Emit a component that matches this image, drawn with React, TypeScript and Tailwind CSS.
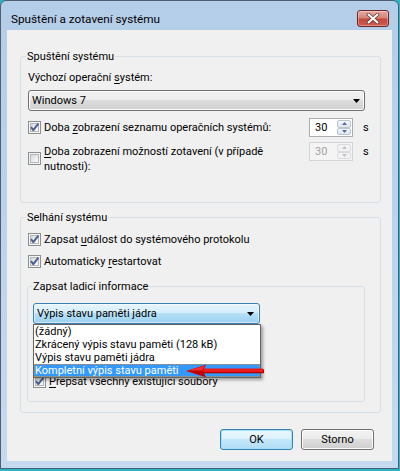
import React from "react";

function Check({ checked = false }: { checked?: boolean }) {
  return (
    <span className="relative flex w-[13px] h-[13px] shrink-0 border border-[#8e8f8f] bg-[#f4f4f4] p-[1px]">
      <span className="block w-full h-full border border-[#b4b7bb] bg-gradient-to-br from-[#d6d9dd] to-[#fbfbfb]" />
      {checked && (
        <svg className="absolute left-0 top-0" width="11" height="11" viewBox="0 0 11 11">
          <path d="M2 5.2 L4.3 8.2 L9.4 1.6" fill="none" stroke="#4b5e90" strokeWidth="1.9" strokeLinejoin="round" />
        </svg>
      )}
    </span>
  );
}

function DownTriangle() {
  return (
    <svg width="7" height="4" viewBox="0 0 7 4">
      <path d="M0 0 H7 L3.5 4 Z" fill="#000" />
    </svg>
  );
}

function SpinHalf({ up, disabled }: { up?: boolean; disabled?: boolean }) {
  return (
    <span
      className={`flex-1 flex items-center justify-center rounded-[2px] border ${
        disabled
          ? "border-[#d9dbde] bg-[#f2f2f2]"
          : "border-[#b9c4d0] bg-gradient-to-b from-[#f6f8fa] to-[#dfe5ec]"
      }`}
    >
      <svg width="5" height="3" viewBox="0 0 5 3">
        <path d={up ? "M0 3 L2.5 0 L5 3 Z" : "M0 0 L5 0 L2.5 3 Z"} fill={disabled ? "#c2c2c2" : "#4e6aa8"} />
      </svg>
    </span>
  );
}

function Spinner({ disabled }: { disabled?: boolean }) {
  return (
    <div
      className={`flex w-[44px] h-[19px] shrink-0 border ${
        disabled ? "border-[#d2d4d8] bg-[#f4f4f4] text-[#a3a3a3]" : "border-[#abadb3] bg-white text-black"
      }`}
    >
      <span className="flex-1 pl-[5px] leading-[17px]">30</span>
      <div className="w-[16px] flex flex-col p-[1px] gap-0">
        <SpinHalf up disabled={disabled} />
        <SpinHalf disabled={disabled} />
      </div>
    </div>
  );
}

function Acc({ c }: { c: string }) {
  return <span className="underline underline-offset-[2px] decoration-1">{c}</span>;
}

export default function App() {
  return (
    <div className="w-[400px] h-[471px] bg-[#2ab6c8] font-[Roboto,'Liberation_Sans',sans-serif] text-[11px] text-black overflow-hidden">
      <div className="w-[399px] h-[469px] rounded-t-[6px] border border-[#4e5f72] bg-gradient-to-b from-[#b4cde8] to-[#c6daef] flex flex-col">
        {/* caption */}
        <div className="h-[29px] flex items-start pl-[10px] pr-[9px] shrink-0">
          <span className="mt-[10px] text-[11.75px] leading-[16px]">Spuštění a zotavení systému</span>
          <div className="ml-auto mt-[9px] w-[32px] h-[17px] rounded-[3px] border border-[#6b2a2a] bg-[linear-gradient(to_bottom,#e9aaa0_0%,#d78378_45%,#c4473b_55%,#cf5e4e_100%)] shadow-[inset_0_0_0_1px_rgba(255,255,255,0.3)] flex items-center justify-center">
            <svg width="14" height="11" viewBox="0 0 14 11">
              <path d="M2.5 1.5 L11.5 9.5 M11.5 1.5 L2.5 9.5" stroke="#5a3a3a" strokeWidth="3.6" strokeLinecap="round" />
              <path d="M2.5 1.5 L11.5 9.5 M11.5 1.5 L2.5 9.5" stroke="#ffffff" strokeWidth="2" strokeLinecap="round" />
            </svg>
          </div>
        </div>

        {/* client area */}
        <div className="flex-1 px-[6px] pb-[7px]">
          <div className="h-[431px] bg-[#f0f0f0] flex flex-col pl-[13px] pr-[11px]">
            {/* Spuštění systému */}
            <fieldset className="mt-[19px] border border-[#d5dfe5] rounded-[3px] px-[7px] pb-[28px]">
              <legend className="-ml-[2px] px-[1px] leading-[15px]">Spuštění systému</legend>
              <div className="pt-[6px] leading-[15px]">
                Výchozí operační <Acc c="s" />ystém:
              </div>
              <div className="mt-[5px] mr-[8px] h-[21px] rounded-[3px] border border-[#707070] bg-[linear-gradient(to_bottom,#f2f2f2_0%,#ebebeb_50%,#dddddd_50%,#cfcfcf_100%)] shadow-[inset_0_0_0_1px_#fcfcfc] flex items-center pl-[3px] pr-[4px]">
                <span className="flex-1 leading-[15px]">Windows 7</span>
                <DownTriangle />
              </div>
              <div className="mt-[7px] flex items-center h-[19px]">
                <Check checked />
                <span className="ml-[3px] flex-1 leading-[15px]">
                  Doba <Acc c="z" />obrazení seznamu operačních systémů:
                </span>
                <Spinner />
                <span className="w-[20px] pl-[10px] leading-[15px]">s</span>
              </div>
              <div className="mt-[5px] flex items-start">
                <div className="flex-1 flex items-center">
                  <Check />
                  <span className="ml-[3px] pt-[2px] pr-[14px] leading-[15px]">
                    <Acc c="D" />oba zobrazení možností zotavení (v případě nutnosti):
                  </span>
                </div>
                <Spinner disabled />
                <span className="w-[20px] pl-[10px] leading-[15px] pt-[2px]">s</span>
              </div>
            </fieldset>

            {/* Selhání systému */}
            <fieldset className="mt-[7px] border border-[#d5dfe5] rounded-[3px] pl-[7px] pr-[7px] pb-[10px]">
              <legend className="-ml-[2px] px-[1px] leading-[15px]">Selhání systému</legend>
              <div className="pt-[7px] flex items-center h-[15px] box-content">
                <Check checked />
                <span className="ml-[3px] leading-[15px]">
                  Zapsat <Acc c="u" />dálost do systémového protokolu
                </span>
              </div>
              <div className="mt-[7px] flex items-center h-[15px]">
                <Check checked />
                <span className="ml-[3px] leading-[15px]">
                  Automaticky <Acc c="r" />estartovat
                </span>
              </div>

              <fieldset className="mt-[10px] -ml-[1px] mr-[8px] border border-[#d5dfe5] rounded-[3px] pl-[5px] pr-[5px] pb-[12px]">
                <legend className="-ml-[1px] px-[1px] leading-[15px]">Zapsat ladicí informace</legend>
                <div className="relative mt-[9px] w-[227px]">
                  <div className="h-[21px] rounded-[3px] border border-[#3c7fb1] bg-[linear-gradient(to_bottom,#e6f5fc_0%,#d2edfb_50%,#b6e0f7_50%,#9bd0f0_100%)] shadow-[inset_0_0_0_1px_rgba(255,255,255,0.55)] flex items-center pl-[3px] pr-[5px]">
                    <span className="flex-1 leading-[15px]">Výpis stavu paměti jádra</span>
                    <DownTriangle />
                  </div>

                  {/* open drop-down list */}
                  <div className="absolute left-0 top-full w-[228px] border border-[#646464] bg-white shadow-[2px_2px_3px_rgba(0,0,0,0.35)] z-10">
                    <div className="h-[13px] leading-[13px] pl-[1px]">(žádný)</div>
                    <div className="h-[13px] leading-[13px] pl-[1px]">Zkrácený výpis stavu paměti (128 kB)</div>
                    <div className="h-[13px] leading-[13px] pl-[1px]">Výpis stavu paměti jádra</div>
                    <div className="h-[13px] leading-[13px] pl-[1px] bg-[#3399ff] text-white outline outline-1 outline-dotted outline-[#d8892c] -outline-offset-1">
                      Kompletní výpis stavu paměti
                    </div>
                  </div>

                  {/* red pointer arrow */}
                  <svg className="absolute left-[153px] top-[61px] z-20" width="80" height="14" viewBox="0 0 80 14">
                    <path d="M16 5.2 H78 V9.2 H16 Z" fill="#b40000" />
                    <path d="M16 4.6 H77 V8 H16 Z" fill="#f01818" />
                    <path d="M0 7 L20 0.8 L17 7 L20 13.2 Z" fill="#c00000" />
                    <path d="M1.5 6.6 L19 1.8 L16.2 6.6 Z" fill="#ff2a2a" />
                  </svg>
                </div>
                <div className="mt-[50px] flex items-center h-[15px]">
                  <Check checked />
                  <span className="ml-[3px] leading-[15px]">
                    <Acc c="P" />řepsat všechny existující soubory
                  </span>
                </div>
              </fieldset>
            </fieldset>

            {/* dialog buttons */}
            <div className="mt-[16px] flex justify-end gap-[8px] pr-[7px]">
              <button className="w-[73px] h-[21px] rounded-[3px] border border-[#3c7fb1] bg-[linear-gradient(to_bottom,#ecf7fd_0%,#dcf1fc_50%,#c3e7fb_50%,#b0dcf5_100%)] shadow-[inset_0_0_0_1px_#9fe0fb] leading-[15px]">
                OK
              </button>
              <button className="w-[73px] h-[21px] rounded-[3px] border border-[#707070] bg-[linear-gradient(to_bottom,#f2f2f2_0%,#ebebeb_50%,#dddddd_50%,#cfcfcf_100%)] shadow-[inset_0_0_0_1px_#fcfcfc] leading-[15px]">
                Storno
              </button>
            </div>
          </div>
        </div>
      </div>
    </div>
  );
}
